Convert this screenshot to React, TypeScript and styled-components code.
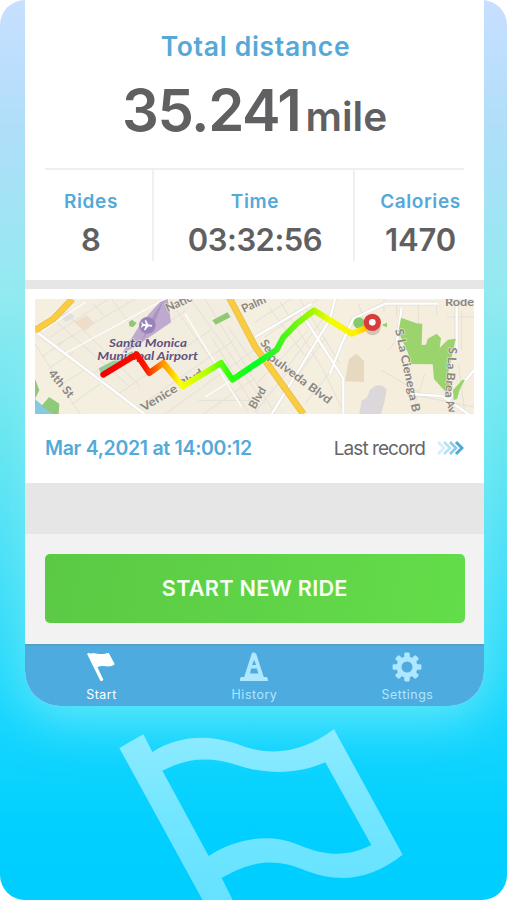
import React from "react";
import styled, { createGlobalStyle } from "styled-components";

const Global = createGlobalStyle`
  * { box-sizing: border-box; }
  body { margin: 0; background: #fff; font-family: Inter, "Liberation Sans", sans-serif; }
`;

const Page = styled.div`
  position: relative;
  width: 507px;
  height: 900px;
  overflow: hidden;
  border-radius: 25px;
  background: linear-gradient(180deg, #c8dfff 0%, #b0defa 14%, #92eaf0 33%, #6ae6f0 47%, #45dff8 62%, #16d6fe 80%, #00cfff 93%, #00ceff 100%);
`;

const Phone = styled.main`
  position: relative;
  display: flex;
  flex-direction: column;
  width: 459px;
  height: 706px;
  margin-left: 25px;
  overflow: hidden;
  border-radius: 0 0 35px 35px;
  background: #fff;
`;

const Glow = styled.div`
  position: absolute;
  left: 25px;
  top: 330px;
  width: 459px;
  height: 376px;
  border-radius: 35px;
  box-shadow: 0 14px 50px rgba(140, 240, 248, 0.65);
`;

const Backdrop = styled.svg`
  position: absolute;
  left: 0;
  top: 700px;
`;

const Summary = styled.section`
  height: 280px;
  padding: 0 20px;
  text-align: center;
`;

const Title = styled.h1`
  margin: 0 0 0 2px;
  padding-top: 30px;
  font-size: 26.5px;
  line-height: 32px;
  font-weight: 600;
  letter-spacing: 0.7px;
  color: #55a9d8;
`;

const Distance = styled.div`
  display: flex;
  align-items: baseline;
  justify-content: center;
  height: 106px;
  padding-top: 13px;
  font-weight: 600;
  line-height: 70px;
  color: #606062;
`;

const Miles = styled.span`
  font-size: 58px;
  letter-spacing: -1.4px;
`;

const Unit = styled.span`
  margin-left: 5px;
  font-size: 40.5px;
`;

const Stats = styled.div`
  display: grid;
  grid-template-columns: 109px 201px 1fr;
  height: 93px;
  border-top: 2px solid #efeff0;
`;

const Stat = styled.div<{ $left?: number; $right?: number; $last?: boolean }>`
  border-right: ${(p) => (p.$last ? "0" : "2px solid #f0f0f0")};
  padding-left: ${(p) => p.$left ?? 0}px;
  padding-right: ${(p) => p.$right ?? 0}px;
  white-space: nowrap;
  display: flex;
  flex-direction: column;
  align-items: center;
`;

const StatLabel = styled.span`
  margin-top: 19px;
  font-size: 19px;
  line-height: 26px;
  font-weight: 600;
  letter-spacing: 0.6px;
  color: #55a9d8;
`;

const StatValue = styled.span<{ $spacing: number }>`
  margin-top: 6px;
  font-size: 31px;
  line-height: 38px;
  font-weight: 600;
  letter-spacing: ${(p) => p.$spacing}px;
  color: #606062;
`;

const Band = styled.div<{ $h: number }>`
  height: ${(p) => p.$h}px;
  flex: none;
  background: #e6e6e6;
`;

const Record = styled.section`
  height: 194px;
  padding: 10px 10px 0;
`;

const Map = styled.svg`
  display: block;
  text {
    font-family: Lato, sans-serif;
  }
`;

const RecordRow = styled.div`
  display: flex;
  align-items: center;
  height: 68px;
  padding: 0 10px;
  svg { margin-left: 12px; }
`;

const DateText = styled.span`
  flex: 1;
  font-size: 19.5px;
  font-weight: 600;
  letter-spacing: -0.3px;
  color: #55a9d8;
  white-space: nowrap;
`;

const LastText = styled.span`
  font-size: 19px;
  letter-spacing: -0.95px;
  color: #666668;
`;

const Action = styled.section`
  height: 110px;
  padding: 20px 19.5px 0 20px;
  background: #f2f2f2;
`;

const StartButton = styled.button`
  width: 100%;
  height: 69px;
  padding: 0 0 2px;
  border: 0;
  border-radius: 5px;
  background: linear-gradient(100deg, #5bc944, #63dd4a);
  color: #f6fff2;
  font: 600 21.7px Inter, sans-serif;
  letter-spacing: 0.25px;
`;

const Tabs = styled.nav`
  display: grid;
  grid-template-columns: repeat(3, 1fr);
  height: 62px;
  border-top: 2px solid #529fcb;
  background: #4eabdf;
`;

const Tab = styled.div<{ $active?: boolean }>`
  display: flex;
  flex-direction: column;
  align-items: center;
  padding-top: 6px;
  color: ${(p) => (p.$active ? "#fff" : "#aee7ff")};
  svg { margin-left: -2px; }
`;

const TabLabel = styled.span`
  margin-top: 5px;
  font-size: 12.4px;
  line-height: 16px;
  letter-spacing: 0.55px;
`;

const BackdropFlag = () => (
  <Backdrop width="507" height="200" viewBox="0 0 1521 600">
    <defs>
      <linearGradient id="flagFill" x1="0" y1="0" x2="0" y2="1">
        <stop offset="0" stopColor="#8eebff" />
        <stop offset=".5" stopColor="#72e6ff" />
        <stop offset="1" stopColor="#64e2ff" />
      </linearGradient>
    </defs>
    <path
      fill="url(#flagFill)"
      fillRule="evenodd"
      d="M358 144L430 103L457 156C535 107 620 103 706 130C795 166 890 170 1002 88L1208 464C1115 538 1020 551 920 513C825 472 755 482 665 534L702 608L612 608ZM487 212L626 468C700 420 800 395 895 434C990 474 1050 466 1114 435L976 187C890 225 795 224 708 194C620 168 560 176 487 212Z"
    />
  </Backdrop>
);

const RideMap = () => (
  <Map width="439" height="115" viewBox="30 26 1317 345">
    <defs>
      <linearGradient id="route" gradientUnits="userSpaceOnUse" x1="235" y1="0" x2="1042" y2="0">
        <stop offset="0" stopColor="#f00000" />
        <stop offset=".15" stopColor="#fa1000" />
        <stop offset=".215" stopColor="#ff8a00" />
        <stop offset=".285" stopColor="#ffff00" />
        <stop offset=".38" stopColor="#b8ff00" />
        <stop offset=".46" stopColor="#35ff10" />
        <stop offset=".56" stopColor="#00ff20" />
        <stop offset=".65" stopColor="#38f520" />
        <stop offset=".78" stopColor="#a8f500" />
        <stop offset=".84" stopColor="#efff00" />
        <stop offset=".94" stopColor="#fff000" />
        <stop offset="1" stopColor="#ffa800" />
      </linearGradient>
    </defs>
    <rect x="30" y="26" width="1317" height="345" fill="#f5efe0" />
    <path d="M30 130L185 26H620L780 371H360L30 140Z" fill="#f3eddf" />
    <path d="M935 371L970 90L1060 40H1347V371Z" fill="#f6eedd" />
    <path d="M150 95L185 75L208 97L180 122Z" fill="#eeddc9" />
    <path d="M105 75L128 62L150 80L122 96Z" fill="#e3e0dc" />
    <path d="M960 273L972 205L995 190L1017 212V275Z" fill="#e7d9c0" />
    <path d="M1003 371L1010 330Q1030 326 1033 301Q1062 270 1085 298Q1080 335 1068 371Z" fill="#dcd7da" />
    <path d="M30 326L82 371H30Z" fill="#87c9e1" />
    <path d="M30 265L43 300L30 325ZM50 346L72 320L103 340L101 371H82Z" fill="#8fc97a" />
    <g fill="none" stroke="#e3e0d8" strokeWidth="3">
      <path d="M50 122L182 35M75 140L250 26M98 162L330 26M122 188L420 26M205 250L480 62M280 311L560 116M340 350L625 151M420 371L690 177M520 330H690M535 371L690 263" />
      <path d="M95 95L315 290M125 70L345 288M205 40L235 75M260 26L315 100M455 60L670 365M500 30L720 340M540 26L750 371M560 140L700 371M610 110L690 225" />
      <path d="M30 160L165 371M50 200L115 155M70 235L145 185M105 285L185 235M140 342L225 281" />
      <path d="M690 95L800 26M720 140L880 26M765 35L890 230L960 371M825 26L945 220M735 54L850 210M770 255L905 70M695 280L850 120M690 365L800 230M775 315L900 145M840 340L920 240M1077 26V65M1115 35V80M1180 40V110M1235 42V75M1265 80H1347M1290 42V160M1310 60V180" />
      <path d="M1000 40L1025 110M1145 110L1090 180M1070 240L1190 310M1145 310L1347 350M1200 250L1160 371M1300 220L1320 371" />
    </g>
    <g fill="none" stroke="#e2dfd8" strokeWidth="11">
      <path d="M35 125L205 254L358 371M690 140L860 40M830 70L955 265V371M740 371L915 87L930 26M915 250L950 160L985 85L1080 40H1240M1130 52L1115 160M1295 42V180M1140 310L1250 317L1330 371M1270 330L1347 240" />
    </g>
    <g fill="none" stroke="#fff" strokeWidth="7">
      <path d="M35 125L205 254L358 371M690 140L860 40M830 70L955 265V371M740 371L915 87L930 26M915 250L950 160L985 85L1080 40H1240M1130 52L1115 160M1295 42V180M1140 310L1250 317L1330 371M1270 330L1347 240" />
      <path d="M50 122L182 35M122 188L420 26M480 70L650 350M540 320L690 225" strokeWidth="4" />
    </g>
    <path d="M30 120L85 86L142 26M612 20L690 168L835 371" fill="none" stroke="#e3bc57" strokeWidth="20" />
    <path d="M30 120L85 86L142 26M612 20L690 168L835 371" fill="none" stroke="#fbcd3d" strokeWidth="15" />
    <path d="M292 188L350 95L405 35L428 26L438 96L330 170Z" fill="#bdaace" />
    <path d="M345 160L388 70L416 28L392 90Z" fill="#ad92c4" />
    <path d="M221 234L322 183L330 200L230 255Z" fill="#91ce95" />
    <path d="M312 96L320 88L335 98L324 111L313 108ZM562 90L607 66L617 80L572 103Z" fill="#90c873" />
    <path d="M1128 82L1175 99L1192 100L1190 164L1203 163L1208 145L1235 130L1248 144L1244 172L1269 148L1292 145L1270 245L1277 308L1262 305L1227 266L1223 222L1155 221L1150 190L1120 124ZM1284 300L1312 268L1320 270L1305 295L1296 326L1286 330Z" fill="#9bd46d" />
    <circle cx="1002" cy="98" r="17" fill="#85cb69" />
    <path d="M1070 104L1086 97V111Z" fill="#91ce70" />
    <circle cx="367" cy="105" r="25" fill="#9a83b8" />
    <path transform="translate(367 105) rotate(5)" d="M15 0Q15 -3 10 -3H3L-5 -15H-9L-5 -3H-12L-16 -8H-19L-16 0L-19 8H-16L-12 3H-5L-9 15H-5L3 3H10Q15 3 15 0Z" fill="#fff" />
    <g fontSize="36" fontWeight="700" fontStyle="italic" fill="#62527c" stroke="#f4eee4" strokeWidth="3" paintOrder="stroke">
      <text x="252" y="171" textLength="234" lengthAdjust="spacingAndGlyphs">Santa Monica</text>
      <text x="217" y="208" textLength="302" lengthAdjust="spacingAndGlyphs">Municipal Airport</text>
    </g>
    <g fontSize="35" fontWeight="700" fill="#8a8782" stroke="#f5f0e6" strokeWidth="3" paintOrder="stroke">
      <text transform="translate(428 66) rotate(-25)">Natic</text>
      <text transform="translate(656 68) rotate(-25)">Palm</text>
      <text transform="translate(68 250) rotate(50)" textLength="98" lengthAdjust="spacingAndGlyphs">4th St</text>
      <text transform="translate(356 364) rotate(-31)" textLength="212" lengthAdjust="spacingAndGlyphs">Venice Blvd</text>
      <text transform="translate(704 158) rotate(55)">Se</text>
      <text transform="translate(727 205) rotate(37)" textLength="228" lengthAdjust="spacingAndGlyphs">pulveda Blvd</text>
      <text transform="translate(690 358) rotate(-60)">Blvd</text>
      <text transform="translate(1110 118) rotate(78)" textLength="254" lengthAdjust="spacingAndGlyphs">S La Cienega B</text>
      <text transform="translate(1271 170) rotate(94)" textLength="152" lengthAdjust="spacingAndGlyphs">S La Brea</text>
      <text transform="translate(1262 334) rotate(72)" fontSize="32">Av</text>
      <text x="1260" y="48" textLength="87" lengthAdjust="spacingAndGlyphs">Rode</text>
    </g>
    <circle cx="1043" cy="111" r="24" fill="#c9b8ac" opacity=".8" />
    <path d="M235 253L335 192L373 248L415 218L473 288L588 218L622 268L755 178L775 141L815 100L867 60L980 130L1042 105" fill="none" stroke="url(#route)" strokeWidth="18" strokeLinecap="round" strokeLinejoin="round" />
    <circle cx="1042" cy="96" r="18" fill="#fff" stroke="#d83d3b" strokeWidth="16" />
  </Map>
);

const Chevrons = () => (
  <svg width="27" height="16" viewBox="0 0 27 16" fill="none" strokeWidth="2.6">
    <path d="M1 2L7 8L1 14" stroke="#d5effa" />
    <path d="M7 2L13 8L7 14" stroke="#b5e1f4" />
    <path d="M13 2L19 8L13 14" stroke="#88cbe9" />
    <path d="M19 2L25 8L19 14" stroke="#4caada" strokeWidth="3" />
  </svg>
);

const FlagIcon = () => (
  <svg width="30" height="30" viewBox="0 0 30 30" fill="currentColor">
    <path d="M1 1.8L3 .8L4 1.8C9 0 14 4 22.7.8L28.8 12.2C23 17 18 12 11.5 15.2L17.4 27.8Q16 30 14.2 28.5Z" />
  </svg>
);

const ConeIcon = () => (
  <svg width="30" height="30" viewBox="0 0 30 30" fill="currentColor">
    <path fillRule="evenodd" d="M13 .8Q15.3 -.4 17.2 1.8L24.8 25H27.4Q29 25 29 29H1Q.8 25 2.6 25H5.2ZM15.1 7.7L13.1 13H17.1ZM12.2 16.5L11 21.5H19.3L17.9 16.5Z" />
  </svg>
);

const GearIcon = () => (
  <svg width="30" height="30" viewBox="-15 -15 30 30">
    <g fill="currentColor">
      {[0, 45, 90, 135].map((a) => (
        <rect key={a} x="-2.8" y="-14.4" width="5.6" height="28.8" rx="1.4" transform={`rotate(${a})`} />
      ))}
      <circle r="10.5" />
    </g>
    <circle r="5.5" fill="#4eabdf" />
  </svg>
);

export default function App() {
  return (
    <>
      <Global />
      <Page>
        <Glow />
        <BackdropFlag />
        <Phone>
          <Summary>
            <Title>Total distance</Title>
            <Distance>
              <Miles>35.241</Miles>
              <Unit>mile</Unit>
            </Distance>
            <Stats>
              <Stat $right={15}>
                <StatLabel>Rides</StatLabel>
                <StatValue $spacing={0}>8</StatValue>
              </Stat>
              <Stat $left={3}>
                <StatLabel>Time</StatLabel>
                <StatValue $spacing={-0.5}>03:32:56</StatValue>
              </Stat>
              <Stat $last $left={22}>
                <StatLabel>Calories</StatLabel>
                <StatValue $spacing={-0.1}>1470</StatValue>
              </Stat>
            </Stats>
          </Summary>
          <Band $h={9} />
          <Record>
            <RideMap />
            <RecordRow>
              <DateText>Mar 4,2021 at 14:00:12</DateText>
              <LastText>Last record</LastText>
              <Chevrons />
            </RecordRow>
          </Record>
          <Band $h={51} />
          <Action>
            <StartButton>START NEW RIDE</StartButton>
          </Action>
          <Tabs>
            <Tab $active>
              <FlagIcon />
              <TabLabel>Start</TabLabel>
            </Tab>
            <Tab>
              <ConeIcon />
              <TabLabel>History</TabLabel>
            </Tab>
            <Tab>
              <GearIcon />
              <TabLabel>Settings</TabLabel>
            </Tab>
          </Tabs>
        </Phone>
      </Page>
    </>
  );
}
